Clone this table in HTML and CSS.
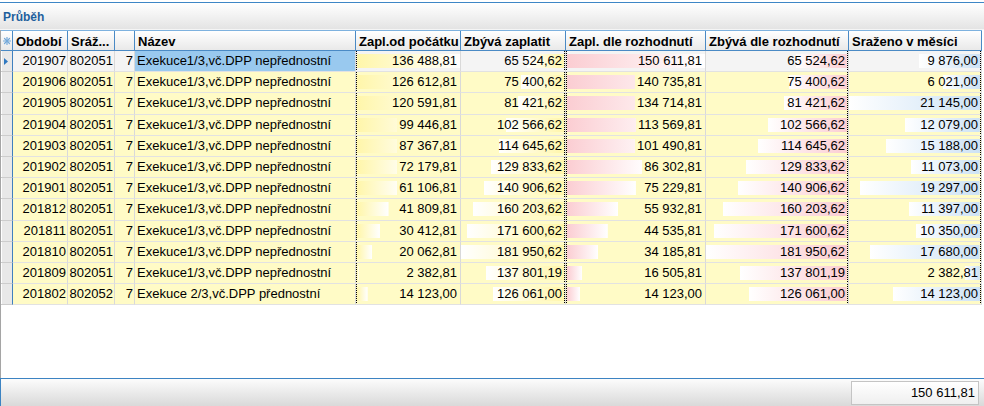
FILE: index.html
```html
<!DOCTYPE html>
<html lang="cs">
<head>
<meta charset="utf-8">
<title>Průběh</title>
<link rel="stylesheet" href="styles.css">
</head>
<body>
<div class="panel">
  <div class="titlebar"><span class="title">Průběh</span></div>
  <div class="grid">
    <div class="hdr">
      <div class="h s"><svg width="8" height="8" viewBox="0 0 8 8"><g stroke="#74a9da" stroke-width="1.2" stroke-linecap="round"><line x1="4" y1="0.5" x2="4" y2="7.5"/><line x1="0.5" y1="4" x2="7.5" y2="4"/><line x1="1.5" y1="1.5" x2="6.5" y2="6.5"/><line x1="6.5" y1="1.5" x2="1.5" y2="6.5"/></g></svg></div>
      <div class="h">Období</div>
      <div class="h">Sráž...</div>
      <div class="h"></div>
      <div class="h">Název</div>
      <div class="h">Zapl.od počátku</div>
      <div class="h">Zbývá zaplatit</div>
      <div class="h">Zapl. dle rozhodnutí</div>
      <div class="h">Zbývá dle rozhodnutí</div>
      <div class="h">Sraženo v měsíci</div>
    </div>

    <div class="row cur">
      <div class="c s"><svg width="4" height="7" viewBox="0 0 4 7"><polygon points="0,0 4,3.5 0,7" fill="#2f78c0"/></svg></div>
      <div class="c r">201907</div><div class="c r">802051</div><div class="c r">7</div>
      <div class="c name focus">Exekuce1/3,vč.DPP nepřednostní</div>
      <div class="c barL y" style="--p:1"><span class="v">136 488,81</span></div>
      <div class="c barR y" style="--p:.3601">65 524,62</div>
      <div class="c barL p" style="--p:1"><span class="v">150 611,81</span></div>
      <div class="c barR p" style="--p:.3601">65 524,62</div>
      <div class="c barR b" style="--p:.4671">9 876,00</div>
    </div>
    <div class="row">
      <div class="c s"></div>
      <div class="c r">201906</div><div class="c r">802051</div><div class="c r">7</div>
      <div class="c name">Exekuce1/3,vč.DPP nepřednostní</div>
      <div class="c barL y" style="--p:.9276"><span class="v">126 612,81</span></div>
      <div class="c barR y" style="--p:.4144">75 400,62</div>
      <div class="c barL p" style="--p:.9344"><span class="v">140 735,81</span></div>
      <div class="c barR p" style="--p:.4144">75 400,62</div>
      <div class="c barR b" style="--p:.2847">6 021,00</div>
    </div>
    <div class="row">
      <div class="c s"></div>
      <div class="c r">201905</div><div class="c r">802051</div><div class="c r">7</div>
      <div class="c name">Exekuce1/3,vč.DPP nepřednostní</div>
      <div class="c barL y" style="--p:.8835"><span class="v">120 591,81</span></div>
      <div class="c barR y" style="--p:.4475">81 421,62</div>
      <div class="c barL p" style="--p:.8944"><span class="v">134 714,81</span></div>
      <div class="c barR p" style="--p:.4475">81 421,62</div>
      <div class="c barR b" style="--p:1">21 145,00</div>
    </div>
    <div class="row">
      <div class="c s"></div>
      <div class="c r">201904</div><div class="c r">802051</div><div class="c r">7</div>
      <div class="c name">Exekuce1/3,vč.DPP nepřednostní</div>
      <div class="c barL y" style="--p:.7286"><span class="v">99 446,81</span></div>
      <div class="c barR y" style="--p:.5637">102 566,62</div>
      <div class="c barL p" style="--p:.7541"><span class="v">113 569,81</span></div>
      <div class="c barR p" style="--p:.5637">102 566,62</div>
      <div class="c barR b" style="--p:.5712">12 079,00</div>
    </div>
    <div class="row">
      <div class="c s"></div>
      <div class="c r">201903</div><div class="c r">802051</div><div class="c r">7</div>
      <div class="c name">Exekuce1/3,vč.DPP nepřednostní</div>
      <div class="c barL y" style="--p:.6401"><span class="v">87 367,81</span></div>
      <div class="c barR y" style="--p:.6301">114 645,62</div>
      <div class="c barL p" style="--p:.6739"><span class="v">101 490,81</span></div>
      <div class="c barR p" style="--p:.6301">114 645,62</div>
      <div class="c barR b" style="--p:.7183">15 188,00</div>
    </div>
    <div class="row">
      <div class="c s"></div>
      <div class="c r">201902</div><div class="c r">802051</div><div class="c r">7</div>
      <div class="c name">Exekuce1/3,vč.DPP nepřednostní</div>
      <div class="c barL y" style="--p:.5288"><span class="v">72 179,81</span></div>
      <div class="c barR y" style="--p:.7136">129 833,62</div>
      <div class="c barL p" style="--p:.5730"><span class="v">86 302,81</span></div>
      <div class="c barR p" style="--p:.7136">129 833,62</div>
      <div class="c barR b" style="--p:.5237">11 073,00</div>
    </div>
    <div class="row">
      <div class="c s"></div>
      <div class="c r">201901</div><div class="c r">802051</div><div class="c r">7</div>
      <div class="c name">Exekuce1/3,vč.DPP nepřednostní</div>
      <div class="c barL y" style="--p:.4477"><span class="v">61 106,81</span></div>
      <div class="c barR y" style="--p:.7744">140 906,62</div>
      <div class="c barL p" style="--p:.4995"><span class="v">75 229,81</span></div>
      <div class="c barR p" style="--p:.7744">140 906,62</div>
      <div class="c barR b" style="--p:.9126">19 297,00</div>
    </div>
    <div class="row">
      <div class="c s"></div>
      <div class="c r">201812</div><div class="c r">802051</div><div class="c r">7</div>
      <div class="c name">Exekuce1/3,vč.DPP nepřednostní</div>
      <div class="c barL y" style="--p:.3063"><span class="v">41 809,81</span></div>
      <div class="c barR y" style="--p:.8805">160 203,62</div>
      <div class="c barL p" style="--p:.3714"><span class="v">55 932,81</span></div>
      <div class="c barR p" style="--p:.8805">160 203,62</div>
      <div class="c barR b" style="--p:.5390">11 397,00</div>
    </div>
    <div class="row">
      <div class="c s"></div>
      <div class="c r">201811</div><div class="c r">802051</div><div class="c r">7</div>
      <div class="c name">Exekuce1/3,vč.DPP nepřednostní</div>
      <div class="c barL y" style="--p:.2228"><span class="v">30 412,81</span></div>
      <div class="c barR y" style="--p:.9431">171 600,62</div>
      <div class="c barL p" style="--p:.2957"><span class="v">44 535,81</span></div>
      <div class="c barR p" style="--p:.9431">171 600,62</div>
      <div class="c barR b" style="--p:.4895">10 350,00</div>
    </div>
    <div class="row">
      <div class="c s"></div>
      <div class="c r">201810</div><div class="c r">802051</div><div class="c r">7</div>
      <div class="c name">Exekuce1/3,vč.DPP nepřednostní</div>
      <div class="c barL y" style="--p:.1470"><span class="v">20 062,81</span></div>
      <div class="c barR y" style="--p:1">181 950,62</div>
      <div class="c barL p" style="--p:.2270"><span class="v">34 185,81</span></div>
      <div class="c barR p" style="--p:1">181 950,62</div>
      <div class="c barR b" style="--p:.8361">17 680,00</div>
    </div>
    <div class="row">
      <div class="c s"></div>
      <div class="c r">201809</div><div class="c r">802051</div><div class="c r">7</div>
      <div class="c name">Exekuce1/3,vč.DPP nepřednostní</div>
      <div class="c barL y" style="--p:.0175"><span class="v">2 382,81</span></div>
      <div class="c barR y" style="--p:.7574">137 801,19</div>
      <div class="c barL p" style="--p:.1096"><span class="v">16 505,81</span></div>
      <div class="c barR p" style="--p:.7574">137 801,19</div>
      <div class="c barR b" style="--p:.1127">2 382,81</div>
    </div>
    <div class="row">
      <div class="c s"></div>
      <div class="c r">201802</div><div class="c r">802052</div><div class="c r">7</div>
      <div class="c name">Exekuce 2/3,vč.DPP přednostní</div>
      <div class="c barL y" style="--p:.1035"><span class="v">14 123,00</span></div>
      <div class="c barR y" style="--p:.6928">126 061,00</div>
      <div class="c barL p" style="--p:.0938"><span class="v">14 123,00</span></div>
      <div class="c barR p" style="--p:.6928">126 061,00</div>
      <div class="c barR b" style="--p:.6679">14 123,00</div>
    </div>
    <div class="filler"></div>
  </div>
  <div class="footer"><div class="sum">150 611,81</div></div>
</div>
</body>
</html>
```
FILE: styles.css
```css
html, body {
  margin: 0;
  padding: 0;
  background: #ffffff;
}
body {
  width: 984px;
  height: 406px;
  overflow: hidden;
  font-family: "Liberation Sans", Arial, sans-serif;
  font-size: 13px;
  color: #000;
}
.panel {
  display: flex;
  flex-direction: column;
  height: 406px;
}
.titlebar {
  margin-top: 2px;
  height: 28px;
  box-sizing: border-box;
  border-top: 1px solid #3d86c6;
  background: linear-gradient(#ffffff 0%, #f4f4f4 40%, #e4e4e4 95%, #ffffff 100%);
  display: flex;
  align-items: center;
  padding-left: 3px;
  padding-top: 1px;
}
.title {
  font-weight: bold;
  font-size: 12px;
  color: #1e5f9c;
}
.grid {
  flex: 1;
  display: flex;
  flex-direction: column;
  border-left: 1px solid #a5a5a5;
  min-height: 0;
}
.hdr, .row {
  display: grid;
  grid-template-columns: 12px 55px 47px 20px 221px 105px 105px 140px 143px 133px;
  width: 981px;
}
.hdr {
  height: 21px;
  box-sizing: border-box;
  border-top: 1px solid #7eb2df;
}
.h {
  box-sizing: border-box;
  border-right: 1px solid #4a8ac5;
  border-bottom: 1px solid #4a8ac5;
  background: linear-gradient(#ffffff, #e9e9e9);
  font-weight: bold;
  padding: 2px 0 0 3px;
  line-height: 17px;
  white-space: nowrap;
  overflow: hidden;
}
.h.s {
  padding: 0;
  display: flex;
  align-items: center;
  justify-content: center;
  background: linear-gradient(#ffffff, #e8e8e8);
}
.row {
  height: 21.2px;
  --bg: #fffbc6;
  background: var(--bg);
}
.row.cur {
  --bg: #f4f4f4;
}
.c {
  box-sizing: border-box;
  border-right: 1px solid #d9d9d9;
  border-bottom: 1px solid #e2e2e2;
  line-height: 20px;
  white-space: nowrap;
  overflow: hidden;
}
.c.s {
  background: #e8e8e8;
  border-right: 1px solid #3f80bf;
  border-bottom: 1px solid #cdcdcd;
  box-shadow: inset 1px 0 #ffffff;
  display: flex;
  align-items: center;
  padding-left: 3px;
}
.r {
  text-align: right;
  padding-right: 1px;
}
.name {
  padding-left: 2px;
}
.name.focus {
  background: #99c9ef;
}
.y { --c: #fff6aa; }
.p { --c: #fbcdd2; }
.b { --c: #cde2f5; }
.barL, .barR {
  text-align: right;
  padding-right: 3px;
  background-repeat: repeat-y, no-repeat;
}
.barL {
  background-image: linear-gradient(#000 50%, transparent 50%), linear-gradient(to right, var(--c), #ffffff);
  background-size: 1px 2px, calc((100% - 1px) * var(--p)) 14px;
  background-position: 0 0, 1px 50%;
}
.barR {
  background-image: linear-gradient(#000 50%, transparent 50%), linear-gradient(to right, #ffffff, var(--c));
  background-size: 1px 2px, calc((100% - 1px) * var(--p)) 14px;
  background-position: 100% 0, calc(100% - 1px) 50%;
}
.v {
  background: var(--bg);
  padding-left: 2px;
}
.row.cur .v {
  background: transparent;
}
.filler {
  flex: 1;
  background: #ffffff;
}
.footer {
  height: 28px;
  box-sizing: border-box;
  border-top: 1px solid #3c83c2;
  border-left: 1px solid #3c83c2;
  background: linear-gradient(#fcfcfc, #d9d9d9);
  display: flex;
  justify-content: flex-end;
  align-items: center;
  padding-right: 5px;
}
.sum {
  width: 128px;
  height: 24px;
  box-sizing: border-box;
  border: 1px solid #c4c4c4;
  background: linear-gradient(#ffffff, #efefef);
  text-align: right;
  padding-right: 3px;
  line-height: 22px;
}
```
